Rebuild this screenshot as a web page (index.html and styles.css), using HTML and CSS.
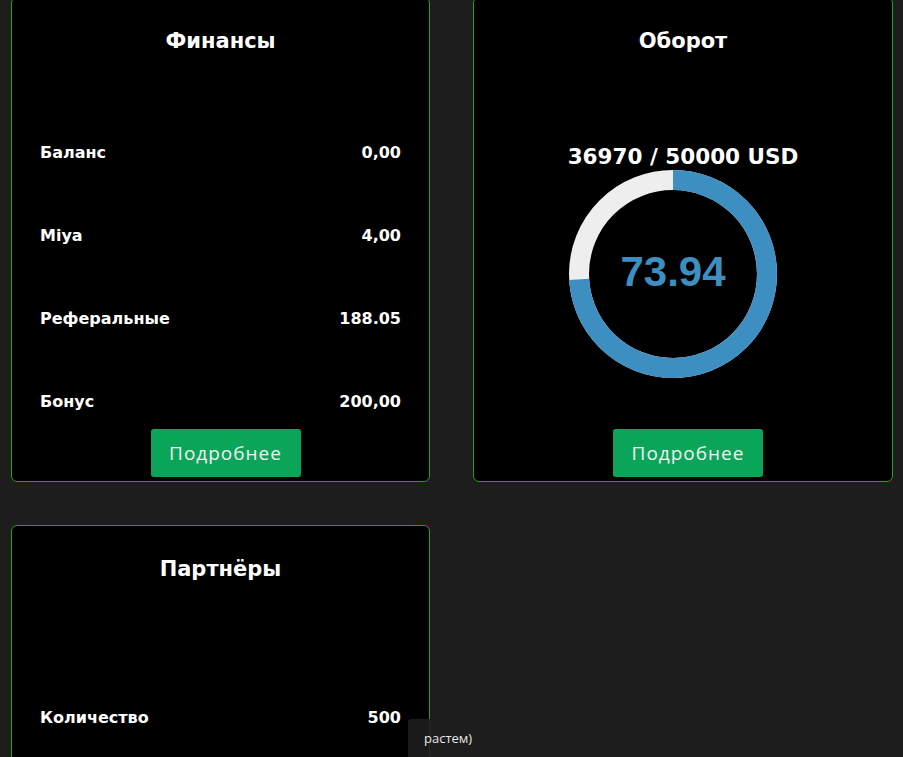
FILE: index.html
```html
<!DOCTYPE html>
<html lang="ru">
<head>
<meta charset="utf-8">
<link rel="stylesheet" href="styles.css">
</head>
<body>
<div class="grid">
  <section class="card card-fin">
    <h2 class="title">Финансы</h2>
    <div class="rows">
      <div class="row"><span>Баланс</span><span>0,00</span></div>
      <div class="row"><span>Miya</span><span>4,00</span></div>
      <div class="row"><span>Реферальные</span><span>188.05</span></div>
      <div class="row"><span>Бонус</span><span>200,00</span></div>
    </div>
    <a class="btn">Подробнее</a>
  </section>
  <section class="card card-turn">
    <h2 class="title">Оборот</h2>
    <div class="turn-sum">36970 / 50000 USD</div>
    <div class="donut">
      <svg width="208" height="208" viewBox="0 0 208 208">
        <circle cx="104" cy="104" r="94" fill="none" stroke="#eeeeee" stroke-width="20"/>
        <circle cx="104" cy="104" r="94" fill="none" stroke="#3d8ec1" stroke-width="20" stroke-dasharray="436.7 1000" transform="rotate(-90 104 104)"/>
      </svg>
      <span class="donut-val">73.94</span>
    </div>
    <a class="btn">Подробнее</a>
  </section>
  <section class="card card-partners">
    <h2 class="title">Партнёры</h2>
    <div class="rows rows-partners">
      <div class="row"><span>Количество</span><span>500</span></div>
    </div>
  </section>
</div>
<div class="tooltip">растем)</div>
</body>
</html>
```
FILE: styles.css
```css
html, body {
  margin: 0;
  padding: 0;
  background: #1d1d1d;
  height: 757px;
  overflow: hidden;
}
body {
  font-family: "Open Sans", "DejaVu Sans", sans-serif;
  color: #fff;
  position: relative;
}
.grid {
  display: grid;
  grid-template-columns: 419px 420px;
  column-gap: 43px;
  row-gap: 43px;
  padding-left: 11px;
  margin-top: -3px;
}
.card {
  background: #000;
  border: 1px solid #22a022;
  border-radius: 6px;
  box-sizing: border-box;
  display: flex;
  flex-direction: column;
  align-items: center;
  padding: 0 28px;
}
.card-fin, .card-turn {
  height: 485px;
}
.card-partners {
  height: 300px;
}
.title {
  margin: 28px 0 0;
  font-family: "DejaVu Sans", sans-serif;
  font-weight: 700;
  font-size: 21px;
  line-height: 30px;
}
.rows {
  width: 100%;
  display: flex;
  flex-direction: column;
  gap: 63px;
  margin-top: 87px;
}
.rows-partners {
  margin-top: 124px;
}
.row {
  display: flex;
  justify-content: space-between;
  font-family: "DejaVu Sans", sans-serif;
  font-weight: 700;
  font-size: 16px;
  line-height: 20px;
}
.btn {
  margin-top: 17px;
  margin-left: 10px;
  width: 150px;
  height: 48px;
  box-sizing: border-box;
  background: #0ba55a;
  border-radius: 3px;
  color: #f2f2f2;
  font-size: 19px;
  letter-spacing: 1px;
  display: flex;
  align-items: center;
  justify-content: center;
}
.card-turn .btn {
  margin-top: 51px;
}
.turn-sum {
  margin-top: 87px;
  font-family: "DejaVu Sans", sans-serif;
  font-weight: 700;
  font-size: 21.5px;
  line-height: 28px;
}
.donut {
  position: relative;
  width: 208px;
  height: 208px;
  margin-top: -1px;
  margin-right: 20px;
}
.donut svg {
  display: block;
}
.donut-val {
  position: absolute;
  left: 0;
  right: 0;
  top: 78px;
  text-align: center;
  font-family: "Liberation Sans", Arial, sans-serif;
  font-weight: 700;
  font-size: 42px;
  line-height: 48px;
  color: #3d8ec1;
}
.tooltip {
  position: absolute;
  left: 408px;
  top: 719px;
  width: 83px;
  height: 40px;
  box-sizing: border-box;
  padding: 10px 0 0 16px;
  background: rgba(30, 30, 30, 0.88);
  border-radius: 3px;
  font-family: "Open Sans", sans-serif;
  font-size: 13px;
  color: #e6e6e6;
}
```
